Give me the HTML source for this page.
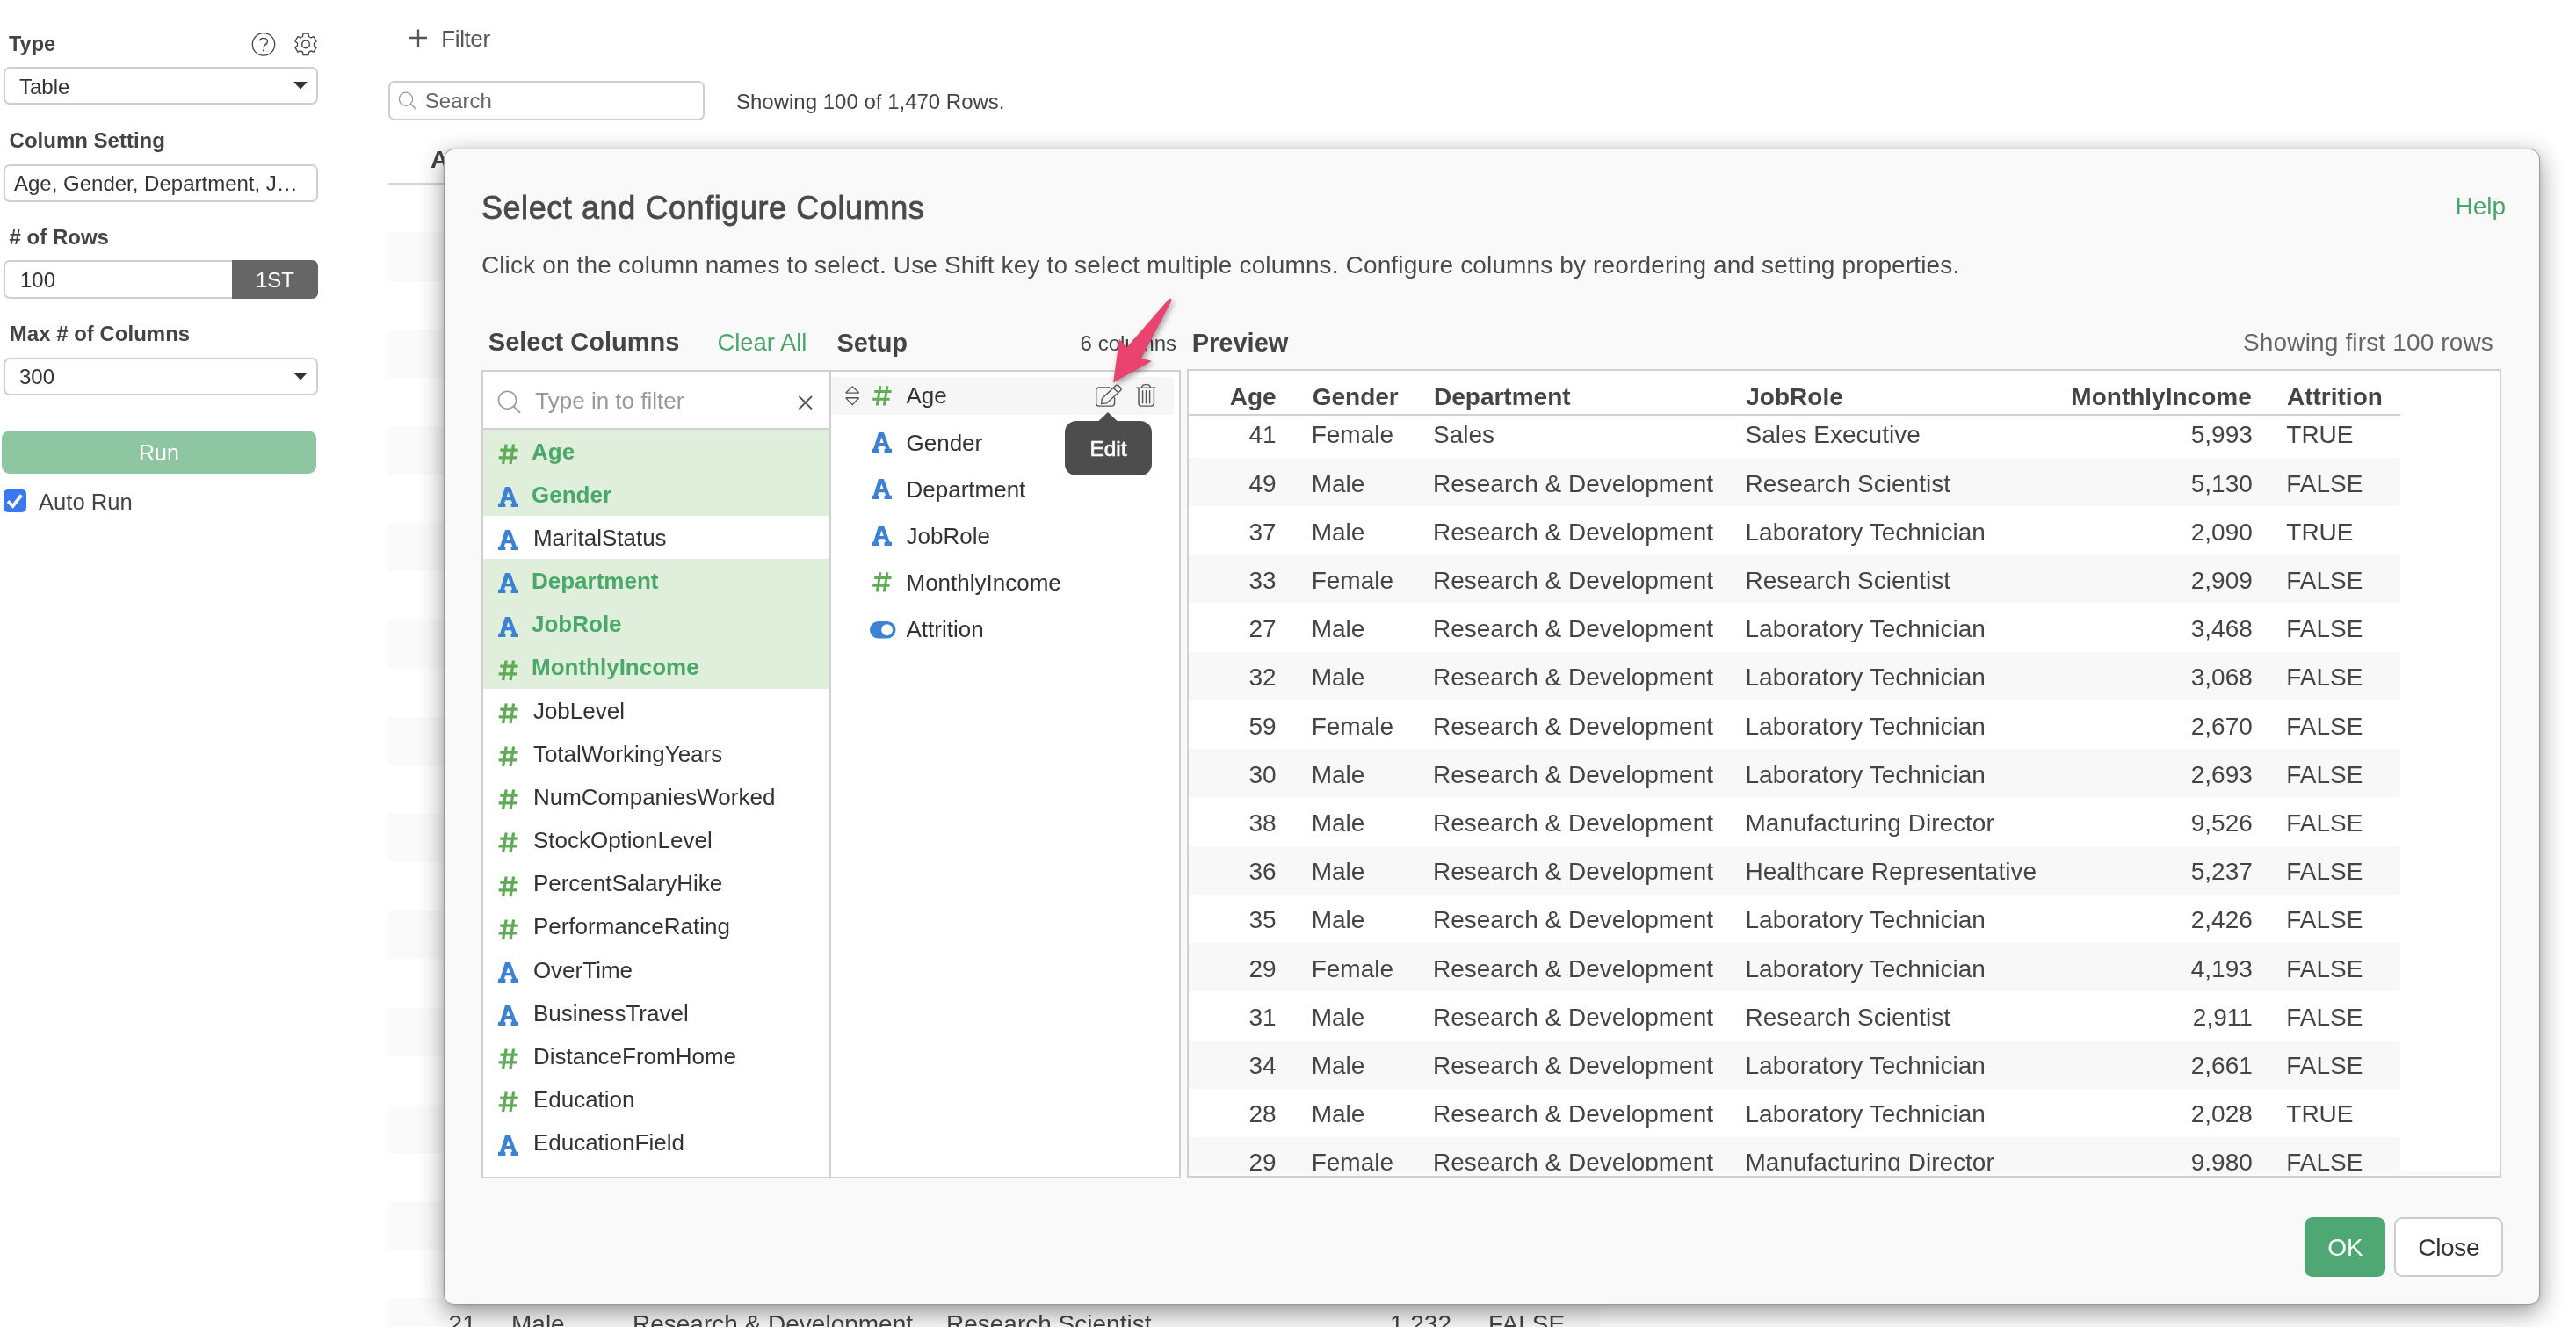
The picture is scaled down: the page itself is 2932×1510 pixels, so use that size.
<!DOCTYPE html>
<html><head><meta charset="utf-8"><style>
html,body{margin:0;padding:0;}
body{width:2932px;height:1510px;position:relative;overflow:hidden;background:#fff;font-family:"Liberation Sans", sans-serif;}
.t{position:absolute;white-space:nowrap;line-height:1;font-family:"Liberation Sans", sans-serif;}
svg{display:block;}
</style></head><body><div id="root" style="position:absolute;left:0;top:0;width:2932px;height:1510px;will-change:transform;">
<div class="t" style="left:10.0px;top:39.0px;font-size:23.5px;font-weight:700;color:#444;">Type</div>
<svg style="position:absolute;left:286px;top:37px;overflow:visible;" width="28" height="28" viewBox="0 0 28 28"><circle cx="14" cy="13.4" r="12.7" fill="none" stroke="#444" stroke-width="1.3"/><path d="M9.2 9.3 C10.2 7.3 11.8 6.4 13.9 6.4 C16.6 6.4 18.4 8.0 18.4 10.3 C18.4 12.3 17.1 13.2 15.8 14.1 C14.6 14.9 14.0 15.8 14.0 17.3" fill="none" stroke="#444" stroke-width="1.4"/><circle cx="14" cy="20.4" r="1.1" fill="#444"/></svg>
<svg style="position:absolute;left:334px;top:37px;overflow:visible;" width="28" height="28" viewBox="0 0 28 28"><path d="M10.56 4.44 L10.93 1.18 L17.07 1.18 L17.44 4.44 L20.04 5.94 L23.05 4.63 L26.12 9.95 L23.48 11.90 L23.48 14.90 L26.12 16.85 L23.05 22.17 L20.04 20.86 L17.44 22.36 L17.07 25.62 L10.93 25.62 L10.56 22.36 L7.96 20.86 L4.95 22.17 L1.88 16.85 L4.52 14.90 L4.52 11.90 L1.88 9.95 L4.95 4.63 L7.96 5.94Z" fill="none" stroke="#444" stroke-width="1.3" stroke-linejoin="round"/><circle cx="14" cy="13.4" r="4.3" fill="none" stroke="#444" stroke-width="1.4"/></svg>
<div style="position:absolute;left:4.0px;top:76.2px;width:357.5px;height:43.3px;background:#fff;border:2px solid #cfcfcf;border-radius:7px;box-sizing:border-box;"></div>
<div class="t" style="left:22.0px;top:87.0px;font-size:24px;font-weight:400;color:#333;">Table</div>
<svg style="position:absolute;left:334px;top:93.2px;overflow:visible;" width="16" height="9" viewBox="0 0 16 9"><path d="M0 0 L16 0 L8 8.5Z" fill="#333"/></svg>
<div class="t" style="left:10.6px;top:148.0px;font-size:24px;font-weight:700;color:#444;">Column Setting</div>
<div style="position:absolute;left:4.0px;top:187.0px;width:357.5px;height:42.5px;background:#fff;border:2px solid #cfcfcf;border-radius:7px;box-sizing:border-box;"></div>
<div class="t" style="left:16.0px;top:197.0px;font-size:24px;font-weight:400;color:#333;">Age, Gender, Department, J…</div>
<div class="t" style="left:10.6px;top:258.0px;font-size:24px;font-weight:700;color:#444;"># of Rows</div>
<div style="position:absolute;left:4.0px;top:296.0px;width:357.5px;height:43.5px;background:#fff;border:2px solid #cfcfcf;border-radius:7px;box-sizing:border-box;"></div>
<div style="position:absolute;left:264.0px;top:296.0px;width:97.5px;height:43.5px;background:#666;border-radius:0 7px 7px 0;"></div>
<div class="t" style="left:23.0px;top:307.0px;font-size:24px;font-weight:400;color:#333;">100</div>
<div class="t" style="left:-187.0px;width:1000px;text-align:center;top:307.0px;font-size:24px;font-weight:400;color:#fff;">1ST</div>
<div class="t" style="left:10.8px;top:368.0px;font-size:24px;font-weight:700;color:#444;">Max # of Columns</div>
<div style="position:absolute;left:4.0px;top:406.5px;width:357.5px;height:43.0px;background:#fff;border:2px solid #cfcfcf;border-radius:7px;box-sizing:border-box;"></div>
<div class="t" style="left:22.0px;top:417.0px;font-size:24px;font-weight:400;color:#333;">300</div>
<svg style="position:absolute;left:334px;top:423.5px;overflow:visible;" width="16" height="9" viewBox="0 0 16 9"><path d="M0 0 L16 0 L8 8.5Z" fill="#333"/></svg>
<div style="position:absolute;left:2.0px;top:490.0px;width:358.0px;height:49.0px;background:#8dc6a1;border-radius:9px;"></div>
<div class="t" style="left:-319.0px;width:1000px;text-align:center;top:503.0px;font-size:25px;font-weight:400;color:#fff;">Run</div>
<div style="position:absolute;left:4.0px;top:557.0px;width:26.0px;height:26.0px;background:#3a78f2;border-radius:5px;"></div>
<svg style="position:absolute;left:4px;top:557px;overflow:visible;" width="26" height="26" viewBox="0 0 26 26"><path d="M5.0 13.4 L10.6 19.0 L20.4 6.4" fill="none" stroke="#fff" stroke-width="3.7"/></svg>
<div class="t" style="left:44.0px;top:559.0px;font-size:25.6px;font-weight:400;color:#444;">Auto Run</div>
<svg style="position:absolute;left:465px;top:33px;overflow:visible;" width="22" height="21" viewBox="0 0 22 21"><path d="M11 0.5 V20 M1 10 H21" stroke="#555" stroke-width="2.3"/></svg>
<div class="t" style="left:502.3px;top:31.0px;font-size:26px;font-weight:400;color:#555;letter-spacing:-0.4px;">Filter</div>
<div style="position:absolute;left:442.0px;top:91.5px;width:359.5px;height:45.0px;background:#fff;border:2px solid #cfcfcf;border-radius:7px;box-sizing:border-box;"></div>
<svg style="position:absolute;left:452px;top:103px;overflow:visible;" width="24" height="24" viewBox="0 0 24 24"><circle cx="10" cy="9.7" r="7.6" fill="none" stroke="#999" stroke-width="1.2"/><path d="M15.4 15.2 L21.8 21.4" stroke="#999" stroke-width="1.4"/></svg>
<div class="t" style="left:483.8px;top:103.0px;font-size:24px;font-weight:400;color:#666;">Search</div>
<div class="t" style="left:838.0px;top:104.0px;font-size:24px;font-weight:400;color:#444;">Showing 100 of 1,470 Rows.</div>
<div class="t" style="left:490.0px;top:168.0px;font-size:28px;font-weight:700;color:#444;">A</div>
<div style="position:absolute;left:442.0px;top:207.5px;width:1379.0px;height:2.0px;background:#d5d5d5;"></div>
<div style="position:absolute;left:442.0px;top:264.3px;width:1379.0px;height:55.3px;background:#fafafa;"></div>
<div style="position:absolute;left:442.0px;top:374.6px;width:1379.0px;height:55.3px;background:#fafafa;"></div>
<div style="position:absolute;left:442.0px;top:484.8px;width:1379.0px;height:55.3px;background:#fafafa;"></div>
<div style="position:absolute;left:442.0px;top:595.1px;width:1379.0px;height:55.3px;background:#fafafa;"></div>
<div style="position:absolute;left:442.0px;top:705.4px;width:1379.0px;height:55.3px;background:#fafafa;"></div>
<div style="position:absolute;left:442.0px;top:815.7px;width:1379.0px;height:55.3px;background:#fafafa;"></div>
<div style="position:absolute;left:442.0px;top:925.9px;width:1379.0px;height:55.3px;background:#fafafa;"></div>
<div style="position:absolute;left:442.0px;top:1036.2px;width:1379.0px;height:55.3px;background:#fafafa;"></div>
<div style="position:absolute;left:442.0px;top:1146.5px;width:1379.0px;height:55.3px;background:#fafafa;"></div>
<div style="position:absolute;left:442.0px;top:1256.7px;width:1379.0px;height:55.3px;background:#fafafa;"></div>
<div style="position:absolute;left:442.0px;top:1367.0px;width:1379.0px;height:55.3px;background:#fafafa;"></div>
<div style="position:absolute;left:442.0px;top:1477.3px;width:1379.0px;height:55.3px;background:#fafafa;"></div>
<div class="t" style="left:510.6px;top:1493.0px;font-size:28px;font-weight:400;color:#444;">21</div>
<div class="t" style="left:582.0px;top:1493.0px;font-size:28px;font-weight:400;color:#444;">Male</div>
<div class="t" style="left:720.0px;top:1493.0px;font-size:28px;font-weight:400;color:#444;">Research &amp; Development</div>
<div class="t" style="left:1077.0px;top:1493.0px;font-size:28px;font-weight:400;color:#444;">Research Scientist</div>
<div class="t" style="right:1280.0px;top:1493.0px;font-size:28px;font-weight:400;color:#444;">1,232</div>
<div class="t" style="left:1694.0px;top:1493.0px;font-size:28px;font-weight:400;color:#444;">FALSE</div>
<div style="position:absolute;left:504.5px;top:168.5px;width:2386.5px;height:1316px;background:#f9f9f9;border:1.5px solid #9a9a9a;border-radius:12px;box-sizing:border-box;box-shadow:0 8px 28px rgba(0,0,0,0.42), 0 0 4px rgba(0,0,0,0.10);"></div>
<div class="t" style="left:547.9px;top:219.0px;font-size:36px;font-weight:400;color:#4a4a4a;letter-spacing:0.58px;-webkit-text-stroke:0.8px #4a4a4a;">Select and Configure Columns</div>
<div class="t" style="right:80.0px;top:221.0px;font-size:28px;font-weight:400;color:#4aa56c;">Help</div>
<div class="t" style="left:547.9px;top:288.0px;font-size:28px;font-weight:400;color:#4a4a4a;letter-spacing:0.14px;">Click on the column names to select. Use Shift key to select multiple columns. Configure columns by reordering and setting properties.</div>
<div class="t" style="left:555.8px;top:375.0px;font-size:29px;font-weight:700;color:#444;">Select Columns</div>
<div class="t" style="left:816.4px;top:376.0px;font-size:27.4px;font-weight:400;color:#4aa56c;">Clear All</div>
<div class="t" style="left:952.5px;top:376.0px;font-size:29px;font-weight:700;color:#444;">Setup</div>
<div class="t" style="right:1593.0px;top:379.0px;font-size:24px;font-weight:400;color:#444;">6 columns</div>
<div class="t" style="left:1356.7px;top:376.0px;font-size:29px;font-weight:700;color:#444;">Preview</div>
<div class="t" style="right:94.0px;top:376.0px;font-size:28px;font-weight:400;color:#666;letter-spacing:0.15px;">Showing first 100 rows</div>
<div style="position:absolute;left:547.5px;top:421.0px;width:398.5px;height:919.5px;background:#fff;border:2px solid #d0d0d0;box-sizing:border-box;"></div>
<div style="position:absolute;left:548.0px;top:486.5px;width:397.0px;height:2.0px;background:#d0d0d0;"></div>
<svg style="position:absolute;left:566px;top:444px;overflow:visible;" width="28" height="28" viewBox="0 0 28 28"><circle cx="11.5" cy="11.2" r="10" fill="none" stroke="#999" stroke-width="1.6"/><path d="M18.6 18.4 L26 25.8" stroke="#999" stroke-width="1.8"/></svg>
<div class="t" style="left:609.3px;top:443.0px;font-size:26px;font-weight:400;color:#999;">Type in to filter</div>
<svg style="position:absolute;left:908px;top:450px;overflow:visible;" width="18" height="17" viewBox="0 0 18 17"><path d="M1.5 1 L16 15.5 M16 1 L1.5 15.5" stroke="#555" stroke-width="1.8"/></svg>
<div style="position:absolute;left:549.5px;top:488.5px;width:394.5px;height:49.5px;background:#dfefdc;"></div>
<svg style="position:absolute;left:567px;top:505.0px;overflow:visible;" width="23" height="23" viewBox="0 0 23 23"><path d="M9.2 0.5 L5.6 23 M17.6 0.5 L14.0 23 M2.3 7.2 H22.6 M0.6 15.8 H21.0" stroke="#60ab55" stroke-width="3.3" fill="none"/></svg>
<div class="t" style="left:605.0px;top:501.0px;font-size:26px;font-weight:700;color:#4aa86a;">Age</div>
<div style="position:absolute;left:549.5px;top:537.7px;width:394.5px;height:49.5px;background:#dfefdc;"></div>
<svg style="position:absolute;left:567px;top:554.16px;overflow:visible;" width="23" height="23" viewBox="0 0 23 23"><path d="M8.0 0 H13.9 L20.8 18.7 H23 V23 H14.6 V18.7 H16.1 L14.9 15.3 H8.1 L6.9 18.7 H8.4 V23 H0 V18.7 H2.2 Z M11.5 5.4 L9.3 11.9 H13.7 Z" fill="#3b83d2" fill-rule="evenodd"/></svg>
<div class="t" style="left:605.0px;top:550.0px;font-size:26px;font-weight:700;color:#4aa86a;">Gender</div>
<svg style="position:absolute;left:567px;top:603.3199999999999px;overflow:visible;" width="23" height="23" viewBox="0 0 23 23"><path d="M8.0 0 H13.9 L20.8 18.7 H23 V23 H14.6 V18.7 H16.1 L14.9 15.3 H8.1 L6.9 18.7 H8.4 V23 H0 V18.7 H2.2 Z M11.5 5.4 L9.3 11.9 H13.7 Z" fill="#3b83d2" fill-rule="evenodd"/></svg>
<div class="t" style="left:606.9px;top:599.0px;font-size:26px;font-weight:400;color:#333;">MaritalStatus</div>
<div style="position:absolute;left:549.5px;top:636.0px;width:394.5px;height:49.5px;background:#dfefdc;"></div>
<svg style="position:absolute;left:567px;top:652.48px;overflow:visible;" width="23" height="23" viewBox="0 0 23 23"><path d="M8.0 0 H13.9 L20.8 18.7 H23 V23 H14.6 V18.7 H16.1 L14.9 15.3 H8.1 L6.9 18.7 H8.4 V23 H0 V18.7 H2.2 Z M11.5 5.4 L9.3 11.9 H13.7 Z" fill="#3b83d2" fill-rule="evenodd"/></svg>
<div class="t" style="left:605.0px;top:648.0px;font-size:26px;font-weight:700;color:#4aa86a;">Department</div>
<div style="position:absolute;left:549.5px;top:685.1px;width:394.5px;height:49.5px;background:#dfefdc;"></div>
<svg style="position:absolute;left:567px;top:701.64px;overflow:visible;" width="23" height="23" viewBox="0 0 23 23"><path d="M8.0 0 H13.9 L20.8 18.7 H23 V23 H14.6 V18.7 H16.1 L14.9 15.3 H8.1 L6.9 18.7 H8.4 V23 H0 V18.7 H2.2 Z M11.5 5.4 L9.3 11.9 H13.7 Z" fill="#3b83d2" fill-rule="evenodd"/></svg>
<div class="t" style="left:605.0px;top:697.0px;font-size:26px;font-weight:700;color:#4aa86a;">JobRole</div>
<div style="position:absolute;left:549.5px;top:734.3px;width:394.5px;height:49.5px;background:#dfefdc;"></div>
<svg style="position:absolute;left:567px;top:750.8px;overflow:visible;" width="23" height="23" viewBox="0 0 23 23"><path d="M9.2 0.5 L5.6 23 M17.6 0.5 L14.0 23 M2.3 7.2 H22.6 M0.6 15.8 H21.0" stroke="#60ab55" stroke-width="3.3" fill="none"/></svg>
<div class="t" style="left:605.0px;top:746.0px;font-size:26px;font-weight:700;color:#4aa86a;">MonthlyIncome</div>
<svg style="position:absolute;left:567px;top:799.96px;overflow:visible;" width="23" height="23" viewBox="0 0 23 23"><path d="M9.2 0.5 L5.6 23 M17.6 0.5 L14.0 23 M2.3 7.2 H22.6 M0.6 15.8 H21.0" stroke="#60ab55" stroke-width="3.3" fill="none"/></svg>
<div class="t" style="left:606.9px;top:796.0px;font-size:26px;font-weight:400;color:#333;">JobLevel</div>
<svg style="position:absolute;left:567px;top:849.12px;overflow:visible;" width="23" height="23" viewBox="0 0 23 23"><path d="M9.2 0.5 L5.6 23 M17.6 0.5 L14.0 23 M2.3 7.2 H22.6 M0.6 15.8 H21.0" stroke="#60ab55" stroke-width="3.3" fill="none"/></svg>
<div class="t" style="left:606.9px;top:845.0px;font-size:26px;font-weight:400;color:#333;">TotalWorkingYears</div>
<svg style="position:absolute;left:567px;top:898.28px;overflow:visible;" width="23" height="23" viewBox="0 0 23 23"><path d="M9.2 0.5 L5.6 23 M17.6 0.5 L14.0 23 M2.3 7.2 H22.6 M0.6 15.8 H21.0" stroke="#60ab55" stroke-width="3.3" fill="none"/></svg>
<div class="t" style="left:606.9px;top:894.0px;font-size:26px;font-weight:400;color:#333;">NumCompaniesWorked</div>
<svg style="position:absolute;left:567px;top:947.4399999999999px;overflow:visible;" width="23" height="23" viewBox="0 0 23 23"><path d="M9.2 0.5 L5.6 23 M17.6 0.5 L14.0 23 M2.3 7.2 H22.6 M0.6 15.8 H21.0" stroke="#60ab55" stroke-width="3.3" fill="none"/></svg>
<div class="t" style="left:606.9px;top:943.0px;font-size:26px;font-weight:400;color:#333;">StockOptionLevel</div>
<svg style="position:absolute;left:567px;top:996.5999999999999px;overflow:visible;" width="23" height="23" viewBox="0 0 23 23"><path d="M9.2 0.5 L5.6 23 M17.6 0.5 L14.0 23 M2.3 7.2 H22.6 M0.6 15.8 H21.0" stroke="#60ab55" stroke-width="3.3" fill="none"/></svg>
<div class="t" style="left:606.9px;top:992.0px;font-size:26px;font-weight:400;color:#333;">PercentSalaryHike</div>
<svg style="position:absolute;left:567px;top:1045.76px;overflow:visible;" width="23" height="23" viewBox="0 0 23 23"><path d="M9.2 0.5 L5.6 23 M17.6 0.5 L14.0 23 M2.3 7.2 H22.6 M0.6 15.8 H21.0" stroke="#60ab55" stroke-width="3.3" fill="none"/></svg>
<div class="t" style="left:606.9px;top:1041.0px;font-size:26px;font-weight:400;color:#333;">PerformanceRating</div>
<svg style="position:absolute;left:567px;top:1094.92px;overflow:visible;" width="23" height="23" viewBox="0 0 23 23"><path d="M8.0 0 H13.9 L20.8 18.7 H23 V23 H14.6 V18.7 H16.1 L14.9 15.3 H8.1 L6.9 18.7 H8.4 V23 H0 V18.7 H2.2 Z M11.5 5.4 L9.3 11.9 H13.7 Z" fill="#3b83d2" fill-rule="evenodd"/></svg>
<div class="t" style="left:606.9px;top:1091.0px;font-size:26px;font-weight:400;color:#333;">OverTime</div>
<svg style="position:absolute;left:567px;top:1144.08px;overflow:visible;" width="23" height="23" viewBox="0 0 23 23"><path d="M8.0 0 H13.9 L20.8 18.7 H23 V23 H14.6 V18.7 H16.1 L14.9 15.3 H8.1 L6.9 18.7 H8.4 V23 H0 V18.7 H2.2 Z M11.5 5.4 L9.3 11.9 H13.7 Z" fill="#3b83d2" fill-rule="evenodd"/></svg>
<div class="t" style="left:606.9px;top:1140.0px;font-size:26px;font-weight:400;color:#333;">BusinessTravel</div>
<svg style="position:absolute;left:567px;top:1193.24px;overflow:visible;" width="23" height="23" viewBox="0 0 23 23"><path d="M9.2 0.5 L5.6 23 M17.6 0.5 L14.0 23 M2.3 7.2 H22.6 M0.6 15.8 H21.0" stroke="#60ab55" stroke-width="3.3" fill="none"/></svg>
<div class="t" style="left:606.9px;top:1189.0px;font-size:26px;font-weight:400;color:#333;">DistanceFromHome</div>
<svg style="position:absolute;left:567px;top:1242.4px;overflow:visible;" width="23" height="23" viewBox="0 0 23 23"><path d="M9.2 0.5 L5.6 23 M17.6 0.5 L14.0 23 M2.3 7.2 H22.6 M0.6 15.8 H21.0" stroke="#60ab55" stroke-width="3.3" fill="none"/></svg>
<div class="t" style="left:606.9px;top:1238.0px;font-size:26px;font-weight:400;color:#333;">Education</div>
<svg style="position:absolute;left:567px;top:1291.56px;overflow:visible;" width="23" height="23" viewBox="0 0 23 23"><path d="M8.0 0 H13.9 L20.8 18.7 H23 V23 H14.6 V18.7 H16.1 L14.9 15.3 H8.1 L6.9 18.7 H8.4 V23 H0 V18.7 H2.2 Z M11.5 5.4 L9.3 11.9 H13.7 Z" fill="#3b83d2" fill-rule="evenodd"/></svg>
<div class="t" style="left:606.9px;top:1287.0px;font-size:26px;font-weight:400;color:#333;">EducationField</div>
<div style="position:absolute;left:946.0px;top:421.0px;width:398.0px;height:919.5px;background:#fff;border:2px solid #d0d0d0;border-left:0;box-sizing:border-box;"></div>
<div style="position:absolute;left:946.0px;top:429.0px;width:390.0px;height:43.0px;background:#f6f6f6;"></div>
<svg style="position:absolute;left:961px;top:438px;overflow:visible;" width="18" height="25" viewBox="0 0 18 25"><path d="M9.2 1.9 L16.0 8.2 Q16.9 9.1 15.6 9.1 H2.8 Q1.5 9.1 2.4 8.2 Z M2.8 14.7 H15.6 Q16.9 14.7 16.0 15.6 L9.2 22.6 L2.4 15.6 Q1.5 14.7 2.8 14.7 Z" fill="none" stroke="#555" stroke-width="1.35" stroke-linejoin="round"/></svg>
<svg style="position:absolute;left:992px;top:438.5px;overflow:visible;" width="23" height="23" viewBox="0 0 23 23"><path d="M10 0.3 L6.2 22.6 M18 0.3 L14.2 22.6 M3.2 6.5 H22.6 M1.2 15.2 H20.6" stroke="#60ab55" stroke-width="2.9" fill="none"/></svg>
<div class="t" style="left:1031.5px;top:437.0px;font-size:26px;font-weight:400;color:#333;">Age</div>
<svg style="position:absolute;left:992px;top:491.79999999999995px;overflow:visible;" width="23" height="23" viewBox="0 0 23 23"><path d="M8.0 0 H13.9 L20.8 18.7 H23 V23 H14.6 V18.7 H16.1 L14.9 15.3 H8.1 L6.9 18.7 H8.4 V23 H0 V18.7 H2.2 Z M11.5 5.4 L9.3 11.9 H13.7 Z" fill="#3b83d2" fill-rule="evenodd"/></svg>
<div class="t" style="left:1031.5px;top:491.0px;font-size:26px;font-weight:400;color:#333;">Gender</div>
<svg style="position:absolute;left:992px;top:545.2px;overflow:visible;" width="23" height="23" viewBox="0 0 23 23"><path d="M8.0 0 H13.9 L20.8 18.7 H23 V23 H14.6 V18.7 H16.1 L14.9 15.3 H8.1 L6.9 18.7 H8.4 V23 H0 V18.7 H2.2 Z M11.5 5.4 L9.3 11.9 H13.7 Z" fill="#3b83d2" fill-rule="evenodd"/></svg>
<div class="t" style="left:1031.5px;top:544.0px;font-size:26px;font-weight:400;color:#333;">Department</div>
<svg style="position:absolute;left:992px;top:598.3px;overflow:visible;" width="23" height="23" viewBox="0 0 23 23"><path d="M8.0 0 H13.9 L20.8 18.7 H23 V23 H14.6 V18.7 H16.1 L14.9 15.3 H8.1 L6.9 18.7 H8.4 V23 H0 V18.7 H2.2 Z M11.5 5.4 L9.3 11.9 H13.7 Z" fill="#3b83d2" fill-rule="evenodd"/></svg>
<div class="t" style="left:1031.5px;top:597.0px;font-size:26px;font-weight:400;color:#333;">JobRole</div>
<svg style="position:absolute;left:992px;top:651.3px;overflow:visible;" width="23" height="23" viewBox="0 0 23 23"><path d="M10 0.3 L6.2 22.6 M18 0.3 L14.2 22.6 M3.2 6.5 H22.6 M1.2 15.2 H20.6" stroke="#60ab55" stroke-width="2.9" fill="none"/></svg>
<div class="t" style="left:1031.5px;top:650.0px;font-size:26px;font-weight:400;color:#333;">MonthlyIncome</div>
<svg style="position:absolute;left:990px;top:706.6px;overflow:visible;" width="30" height="20" viewBox="0 0 30 20"><rect x="0" y="0" width="29.5" height="19.5" rx="9.75" fill="#3b83d2"/><circle cx="19.6" cy="9.75" r="6.4" fill="#fff"/></svg>
<div class="t" style="left:1031.5px;top:703.0px;font-size:26px;font-weight:400;color:#333;">Attrition</div>
<svg style="position:absolute;left:1246px;top:436px;overflow:visible;" width="32" height="28" viewBox="0 0 32 28"><path d="M17.5 5 H5 Q1.7 5 1.7 8.3 V22.8 Q1.7 26.1 5 26.1 H19.3 Q22.6 26.1 22.6 22.8 V16.2" fill="none" stroke="#555" stroke-width="1.4"/><path d="M7.6 23.6 L8.4 17.5 L23.6 3.1 Q25.4 1.4 27.2 3.1 L29.4 5.3 Q31.0 7.0 29.3 8.6 L13.5 22.9 Z M21.4 5.6 L26.0 10.0" fill="none" stroke="#555" stroke-width="1.4" stroke-linejoin="round"/></svg>
<svg style="position:absolute;left:1292px;top:436px;overflow:visible;" width="26" height="28" viewBox="0 0 26 28"><path d="M1.2 5.3 H23.7 M7.3 5.3 Q8 1.6 11.5 1.6 H13.5 Q17 1.6 17.7 5.3 M4.0 5.3 V23.1 Q4.0 26.1 7.0 26.1 H18.4 Q21.4 26.1 21.4 23.1 V5.3" fill="none" stroke="#555" stroke-width="1.45"/><path d="M8.6 8.8 V22.8 M12.5 8.8 V22.8 M16.6 8.8 V22.8" stroke="#555" stroke-width="1.45" stroke-linecap="round"/></svg>
<div style="position:absolute;left:1212px;top:479px;width:99px;height:62px;background:#4d4d4d;border-radius:13px;"></div>
<svg style="position:absolute;left:1250px;top:469px;overflow:visible;" width="22" height="11" viewBox="0 0 22 11"><path d="M0 10.5 L11 0 L22 10.5Z" fill="#4d4d4d"/></svg>
<div class="t" style="left:761.5px;width:1000px;text-align:center;top:499.0px;font-size:24.5px;font-weight:400;color:#fff;-webkit-text-stroke:0.6px #fff;">Edit</div>
<div style="position:absolute;left:1350.5px;top:419.5px;width:1496.5px;height:920.5px;background:#f9f9f9;border:2px solid #d0d0d0;box-sizing:border-box;"></div>
<div style="position:absolute;left:1352.5px;top:421.5px;width:1492.5px;height:910.5px;background:#fff;"></div>
<div class="t" style="right:1479.3px;top:438.0px;font-size:28px;font-weight:700;color:#444;">Age</div>
<div class="t" style="left:1493.7px;top:438.0px;font-size:28px;font-weight:700;color:#444;">Gender</div>
<div class="t" style="left:1632.0px;top:438.0px;font-size:28px;font-weight:700;color:#444;">Department</div>
<div class="t" style="left:1987.3px;top:438.0px;font-size:28px;font-weight:700;color:#444;">JobRole</div>
<div class="t" style="right:369.3px;top:438.0px;font-size:28px;font-weight:700;color:#444;">MonthlyIncome</div>
<div class="t" style="left:2603.0px;top:438.0px;font-size:28px;font-weight:700;color:#444;">Attrition</div>
<div style="position:absolute;left:1352.5px;top:470.5px;width:1379.5px;height:2.0px;background:#d0d0d0;"></div>
<div style="position:absolute;left:1352.5px;top:472.5px;width:1493.5px;height:859.5px;overflow:hidden;">
<div class="t" style="right:1393.3px;top:8.5px;font-size:28px;color:#444;">41</div>
<div class="t" style="left:140.2px;top:8.5px;font-size:28px;color:#444;">Female</div>
<div class="t" style="left:278.5px;top:8.5px;font-size:28px;color:#444;">Sales</div>
<div class="t" style="left:634.0px;top:8.5px;font-size:28px;color:#444;">Sales Executive</div>
<div class="t" style="right:282.2px;top:8.5px;font-size:28px;color:#444;">5,993</div>
<div class="t" style="left:1249.8px;top:8.5px;font-size:28px;color:#444;">TRUE</div>
<div style="position:absolute;left:0;top:48.2px;width:1379.5px;height:55.2px;background:#f8f8f8;"></div>
<div class="t" style="right:1393.3px;top:64.5px;font-size:28px;color:#444;">49</div>
<div class="t" style="left:140.2px;top:64.5px;font-size:28px;color:#444;">Male</div>
<div class="t" style="left:278.5px;top:64.5px;font-size:28px;color:#444;">Research &amp; Development</div>
<div class="t" style="left:634.0px;top:64.5px;font-size:28px;color:#444;">Research Scientist</div>
<div class="t" style="right:282.2px;top:64.5px;font-size:28px;color:#444;">5,130</div>
<div class="t" style="left:1249.8px;top:64.5px;font-size:28px;color:#444;">FALSE</div>
<div class="t" style="right:1393.3px;top:119.5px;font-size:28px;color:#444;">37</div>
<div class="t" style="left:140.2px;top:119.5px;font-size:28px;color:#444;">Male</div>
<div class="t" style="left:278.5px;top:119.5px;font-size:28px;color:#444;">Research &amp; Development</div>
<div class="t" style="left:634.0px;top:119.5px;font-size:28px;color:#444;">Laboratory Technician</div>
<div class="t" style="right:282.2px;top:119.5px;font-size:28px;color:#444;">2,090</div>
<div class="t" style="left:1249.8px;top:119.5px;font-size:28px;color:#444;">TRUE</div>
<div style="position:absolute;left:0;top:158.7px;width:1379.5px;height:55.2px;background:#f8f8f8;"></div>
<div class="t" style="right:1393.3px;top:174.5px;font-size:28px;color:#444;">33</div>
<div class="t" style="left:140.2px;top:174.5px;font-size:28px;color:#444;">Female</div>
<div class="t" style="left:278.5px;top:174.5px;font-size:28px;color:#444;">Research &amp; Development</div>
<div class="t" style="left:634.0px;top:174.5px;font-size:28px;color:#444;">Research Scientist</div>
<div class="t" style="right:282.2px;top:174.5px;font-size:28px;color:#444;">2,909</div>
<div class="t" style="left:1249.8px;top:174.5px;font-size:28px;color:#444;">FALSE</div>
<div class="t" style="right:1393.3px;top:229.5px;font-size:28px;color:#444;">27</div>
<div class="t" style="left:140.2px;top:229.5px;font-size:28px;color:#444;">Male</div>
<div class="t" style="left:278.5px;top:229.5px;font-size:28px;color:#444;">Research &amp; Development</div>
<div class="t" style="left:634.0px;top:229.5px;font-size:28px;color:#444;">Laboratory Technician</div>
<div class="t" style="right:282.2px;top:229.5px;font-size:28px;color:#444;">3,468</div>
<div class="t" style="left:1249.8px;top:229.5px;font-size:28px;color:#444;">FALSE</div>
<div style="position:absolute;left:0;top:269.2px;width:1379.5px;height:55.2px;background:#f8f8f8;"></div>
<div class="t" style="right:1393.3px;top:284.5px;font-size:28px;color:#444;">32</div>
<div class="t" style="left:140.2px;top:284.5px;font-size:28px;color:#444;">Male</div>
<div class="t" style="left:278.5px;top:284.5px;font-size:28px;color:#444;">Research &amp; Development</div>
<div class="t" style="left:634.0px;top:284.5px;font-size:28px;color:#444;">Laboratory Technician</div>
<div class="t" style="right:282.2px;top:284.5px;font-size:28px;color:#444;">3,068</div>
<div class="t" style="left:1249.8px;top:284.5px;font-size:28px;color:#444;">FALSE</div>
<div class="t" style="right:1393.3px;top:340.5px;font-size:28px;color:#444;">59</div>
<div class="t" style="left:140.2px;top:340.5px;font-size:28px;color:#444;">Female</div>
<div class="t" style="left:278.5px;top:340.5px;font-size:28px;color:#444;">Research &amp; Development</div>
<div class="t" style="left:634.0px;top:340.5px;font-size:28px;color:#444;">Laboratory Technician</div>
<div class="t" style="right:282.2px;top:340.5px;font-size:28px;color:#444;">2,670</div>
<div class="t" style="left:1249.8px;top:340.5px;font-size:28px;color:#444;">FALSE</div>
<div style="position:absolute;left:0;top:379.7px;width:1379.5px;height:55.2px;background:#f8f8f8;"></div>
<div class="t" style="right:1393.3px;top:395.5px;font-size:28px;color:#444;">30</div>
<div class="t" style="left:140.2px;top:395.5px;font-size:28px;color:#444;">Male</div>
<div class="t" style="left:278.5px;top:395.5px;font-size:28px;color:#444;">Research &amp; Development</div>
<div class="t" style="left:634.0px;top:395.5px;font-size:28px;color:#444;">Laboratory Technician</div>
<div class="t" style="right:282.2px;top:395.5px;font-size:28px;color:#444;">2,693</div>
<div class="t" style="left:1249.8px;top:395.5px;font-size:28px;color:#444;">FALSE</div>
<div class="t" style="right:1393.3px;top:450.5px;font-size:28px;color:#444;">38</div>
<div class="t" style="left:140.2px;top:450.5px;font-size:28px;color:#444;">Male</div>
<div class="t" style="left:278.5px;top:450.5px;font-size:28px;color:#444;">Research &amp; Development</div>
<div class="t" style="left:634.0px;top:450.5px;font-size:28px;color:#444;">Manufacturing Director</div>
<div class="t" style="right:282.2px;top:450.5px;font-size:28px;color:#444;">9,526</div>
<div class="t" style="left:1249.8px;top:450.5px;font-size:28px;color:#444;">FALSE</div>
<div style="position:absolute;left:0;top:490.2px;width:1379.5px;height:55.2px;background:#f8f8f8;"></div>
<div class="t" style="right:1393.3px;top:505.5px;font-size:28px;color:#444;">36</div>
<div class="t" style="left:140.2px;top:505.5px;font-size:28px;color:#444;">Male</div>
<div class="t" style="left:278.5px;top:505.5px;font-size:28px;color:#444;">Research &amp; Development</div>
<div class="t" style="left:634.0px;top:505.5px;font-size:28px;color:#444;">Healthcare Representative</div>
<div class="t" style="right:282.2px;top:505.5px;font-size:28px;color:#444;">5,237</div>
<div class="t" style="left:1249.8px;top:505.5px;font-size:28px;color:#444;">FALSE</div>
<div class="t" style="right:1393.3px;top:560.5px;font-size:28px;color:#444;">35</div>
<div class="t" style="left:140.2px;top:560.5px;font-size:28px;color:#444;">Male</div>
<div class="t" style="left:278.5px;top:560.5px;font-size:28px;color:#444;">Research &amp; Development</div>
<div class="t" style="left:634.0px;top:560.5px;font-size:28px;color:#444;">Laboratory Technician</div>
<div class="t" style="right:282.2px;top:560.5px;font-size:28px;color:#444;">2,426</div>
<div class="t" style="left:1249.8px;top:560.5px;font-size:28px;color:#444;">FALSE</div>
<div style="position:absolute;left:0;top:600.7px;width:1379.5px;height:55.2px;background:#f8f8f8;"></div>
<div class="t" style="right:1393.3px;top:616.5px;font-size:28px;color:#444;">29</div>
<div class="t" style="left:140.2px;top:616.5px;font-size:28px;color:#444;">Female</div>
<div class="t" style="left:278.5px;top:616.5px;font-size:28px;color:#444;">Research &amp; Development</div>
<div class="t" style="left:634.0px;top:616.5px;font-size:28px;color:#444;">Laboratory Technician</div>
<div class="t" style="right:282.2px;top:616.5px;font-size:28px;color:#444;">4,193</div>
<div class="t" style="left:1249.8px;top:616.5px;font-size:28px;color:#444;">FALSE</div>
<div class="t" style="right:1393.3px;top:671.5px;font-size:28px;color:#444;">31</div>
<div class="t" style="left:140.2px;top:671.5px;font-size:28px;color:#444;">Male</div>
<div class="t" style="left:278.5px;top:671.5px;font-size:28px;color:#444;">Research &amp; Development</div>
<div class="t" style="left:634.0px;top:671.5px;font-size:28px;color:#444;">Research Scientist</div>
<div class="t" style="right:282.2px;top:671.5px;font-size:28px;color:#444;">2,911</div>
<div class="t" style="left:1249.8px;top:671.5px;font-size:28px;color:#444;">FALSE</div>
<div style="position:absolute;left:0;top:711.2px;width:1379.5px;height:55.2px;background:#f8f8f8;"></div>
<div class="t" style="right:1393.3px;top:726.5px;font-size:28px;color:#444;">34</div>
<div class="t" style="left:140.2px;top:726.5px;font-size:28px;color:#444;">Male</div>
<div class="t" style="left:278.5px;top:726.5px;font-size:28px;color:#444;">Research &amp; Development</div>
<div class="t" style="left:634.0px;top:726.5px;font-size:28px;color:#444;">Laboratory Technician</div>
<div class="t" style="right:282.2px;top:726.5px;font-size:28px;color:#444;">2,661</div>
<div class="t" style="left:1249.8px;top:726.5px;font-size:28px;color:#444;">FALSE</div>
<div class="t" style="right:1393.3px;top:781.5px;font-size:28px;color:#444;">28</div>
<div class="t" style="left:140.2px;top:781.5px;font-size:28px;color:#444;">Male</div>
<div class="t" style="left:278.5px;top:781.5px;font-size:28px;color:#444;">Research &amp; Development</div>
<div class="t" style="left:634.0px;top:781.5px;font-size:28px;color:#444;">Laboratory Technician</div>
<div class="t" style="right:282.2px;top:781.5px;font-size:28px;color:#444;">2,028</div>
<div class="t" style="left:1249.8px;top:781.5px;font-size:28px;color:#444;">TRUE</div>
<div style="position:absolute;left:0;top:821.7px;width:1379.5px;height:55.2px;background:#f8f8f8;"></div>
<div class="t" style="right:1393.3px;top:836.5px;font-size:28px;color:#444;">29</div>
<div class="t" style="left:140.2px;top:836.5px;font-size:28px;color:#444;">Female</div>
<div class="t" style="left:278.5px;top:836.5px;font-size:28px;color:#444;">Research &amp; Development</div>
<div class="t" style="left:634.0px;top:836.5px;font-size:28px;color:#444;">Manufacturing Director</div>
<div class="t" style="right:282.2px;top:836.5px;font-size:28px;color:#444;">9,980</div>
<div class="t" style="left:1249.8px;top:836.5px;font-size:28px;color:#444;">FALSE</div>
</div>
<div style="position:absolute;left:2623.0px;top:1385.0px;width:91.5px;height:68.0px;background:#4fa873;border-radius:9px;"></div>
<div class="t" style="left:2169.5px;width:1000px;text-align:center;top:1406.0px;font-size:28px;font-weight:400;color:#fff;">OK</div>
<div style="position:absolute;left:2724.5px;top:1385.0px;width:124.0px;height:68.0px;background:#fff;border:2px solid #cccccc;border-radius:9px;box-sizing:border-box;"></div>
<div class="t" style="left:2287.3px;width:1000px;text-align:center;top:1406.0px;font-size:28px;font-weight:400;color:#333;letter-spacing:-0.3px;">Close</div>
<svg style="position:absolute;left:0;top:0;overflow:visible;filter:drop-shadow(2px 3px 3px rgba(0,0,0,0.35));" width="2932" height="1510" viewBox="0 0 2932 1510"><path d="M1329.1 341.8 Q1330.4 339.4 1332.3 339.8 Q1334.2 340.6 1333.3 342.8 L1299.3 407.4 L1311 411 L1267.1 435.4 L1273.9 385.7 L1282.5 395.2 Z" fill="#e8446f"/></svg>
</div></body></html>
